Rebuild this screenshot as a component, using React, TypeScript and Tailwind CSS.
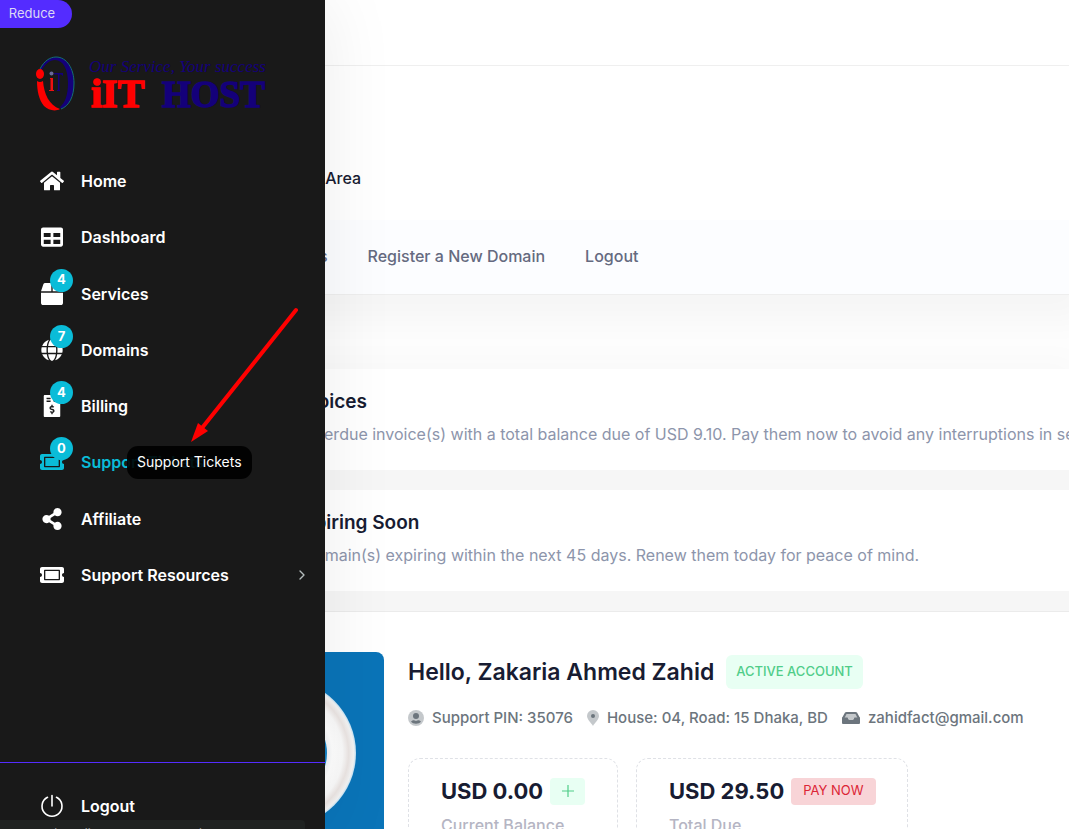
import type { ReactNode } from 'react'
import { FaHome, FaTable, FaBox, FaGlobe, FaFileInvoiceDollar, FaTicketAlt, FaShareAlt } from 'react-icons/fa'
import { FiChevronRight } from 'react-icons/fi'

interface MenuItem {
  label: string
  icon: ReactNode
  badge?: number
  active?: boolean
  submenu?: boolean
}

const menu: MenuItem[] = [
  { label: 'Home', icon: <FaHome size={24} /> },
  { label: 'Dashboard', icon: <FaTable size={22} /> },
  { label: 'Services', icon: <FaBox size={22} />, badge: 4 },
  { label: 'Domains', icon: <FaGlobe size={22} />, badge: 7 },
  { label: 'Billing', icon: <FaFileInvoiceDollar size={22} />, badge: 4 },
  { label: 'Support Tickets', icon: <FaTicketAlt size={24} />, badge: 0, active: true },
  { label: 'Affiliate', icon: <FaShareAlt size={22} /> },
  { label: 'Support Resources', icon: <FaTicketAlt size={24} />, submenu: true }
]

function Logo () {
  return (
    <svg width="240" height="58" viewBox="0 0 240 58" role="img" aria-label="iIT HOST">
      <path d="M4 13C8 5 14 1 20 1C31 1 38 13 38 27C38 41 33 50 25 53L24 51C29 47 32 39 32 27C32 13 27 4 19 4C14 4 9 8 6 14Z" fill="#14007a" />
      <path d="M4 13C8 5 14 1 20 1C31 1 38 13 38 27C38 41 33 50 25 53" fill="none" stroke="#14706f" strokeWidth="1" />
      <ellipse cx="4" cy="18" rx="4" ry="5" fill="#f00" />
      <path d="M1 25Q4 27 7 25C8 38 13 49 24 53C19 56 12 54 8 50C3 44 1 35 1 25Z" fill="#f00" />
      <circle cx="15.500" cy="17.500" r="2" fill="#6a6a9a" />
      <path d="M14 22H17V34H18V35H13V34H14.500V23H14Z" fill="#f01010" />
      <path d="M18 17H27V20L25 18.500H23.500V34H24V35H21V34H22V18.500H18Z" fill="#14007a" />
      <text x="53" y="16" fontFamily="Liberation Serif, serif" fontStyle="italic" fontSize="17" fill="#14007a">Our Service, Your success</text>
      <text x="55" y="51" fontFamily="Liberation Serif, serif" fontWeight="700" fontSize="40" fill="#f00" stroke="#f00" strokeWidth="1.5">iIT</text>
      <text x="126" y="51" fontFamily="Liberation Serif, serif" fontWeight="700" fontSize="37" fill="#14007a" stroke="#14007a" strokeWidth="1.5">HOST</text>
    </svg>
  )
}

function Row ({ item }: { item: MenuItem }) {
  return (
    <li className="relative flex items-center">
      <a href="#" className={`flex w-full items-center pl-10 pr-[15px] ${item.active ? 'text-[#0abcd8]' : 'text-white'}`}>
        <span className="relative flex size-6 items-center justify-center">
          {item.icon}
          {item.badge !== undefined && (
            <span className="absolute -top-[13px] left-2.5 flex size-[23px] items-center justify-center rounded-full bg-[#0abcd8] text-[13px] font-bold text-white">{item.badge}</span>
          )}
        </span>
        <span className="ml-[17px] flex-1 text-base font-semibold">{item.label}</span>
        {item.submenu && <FiChevronRight size={16} className="text-[#b5bdbd]" />}
      </a>
      {item.active && (
        <span role="tooltip" className="absolute left-[127px] flex h-[33px] items-center rounded-[11px] bg-black/90 px-2.5 text-sm text-white">
          Support Tickets
        </span>
      )}
    </li>
  )
}

function Sidebar () {
  return (
    <aside className="absolute inset-y-0 left-0 z-10 flex w-[325px] flex-col bg-[#191919] shadow-[0_0_70px_rgba(0,0,0,0.08)]">
      <div className="flex h-7">
        <button className="w-[72px] rounded-r-full bg-[#542cff] pr-2 text-[13px] text-[#dcd8f5]">Reduce</button>
      </div>
      <a href="#" className="mt-7 ml-9"><Logo /></a>
      <nav className="mt-[39px] flex-1">
        <ul className="grid h-[450px] grid-rows-8">
          {menu.map(item => <Row key={item.label} item={item} />)}
        </ul>
      </nav>
      <div className="h-[67px] border-t border-[#542cff] pt-[31px]">
        <a href="#" className="flex items-center pl-10 text-base font-semibold text-white">
          <svg width="24" height="24" viewBox="0 0 24 24" fill="none" stroke="currentColor" strokeWidth="1.6" strokeLinecap="round" aria-hidden="true">
            <path d="M12 1.500V12M7.500 3.300A10 10 0 1 0 16.500 3.300" />
          </svg>
          <span className="ml-[17px]">Logout</span>
        </a>
      </div>
      <div className="absolute bottom-0 left-0 h-[9px] w-[305px] overflow-hidden rounded-tr bg-[#1f2221] pt-1.5 pl-1 text-xs whitespace-nowrap text-white">
        https://clients.iithost.com/supporttickets.php
      </div>
    </aside>
  )
}

function Alert ({ title, text }: { title: string, text: string }) {
  return (
    <article className="flex h-[101px] flex-col gap-1 bg-white pt-[19px] pl-[207px] whitespace-nowrap">
      <h2 className="text-[19px] font-semibold leading-7 text-[#181c32]">{title}</h2>
      <p className="text-base leading-7 text-[#8d95ab]">{text}</p>
    </article>
  )
}

function Avatar () {
  return (
    <svg className="size-[204px] shrink-0 rounded-lg" viewBox="0 0 204 204" aria-hidden="true">
      <defs>
        <radialGradient id="ring">
          <stop offset="0.62" stopColor="#f4f6f8" />
          <stop offset="0.68" stopColor="#fff" />
          <stop offset="0.82" stopColor="#fafafa" />
          <stop offset="0.9" stopColor="#ebe5e3" />
          <stop offset="0.97" stopColor="#f4f4f4" />
          <stop offset="1" stopColor="#c4e2f4" />
        </radialGradient>
      </defs>
      <rect width="204" height="204" fill="#0a74b8" />
      <circle cx="102" cy="101" r="74" fill="url(#ring)" />
      <circle cx="102" cy="101" r="45" fill="#1582c4" />
    </svg>
  )
}

function Profile () {
  return (
    <section className="flex gap-6 border-t border-[#ebebeb] bg-white pt-10 pl-[180px] whitespace-nowrap">
      <Avatar />
      <div>
        <div className="flex h-10 items-center gap-3">
          <h1 className="text-[23px] font-semibold text-[#181c32]">Hello, Zakaria Ahmed Zahid</h1>
          <span className="flex h-[34px] items-center rounded-md bg-[#e8fff3] px-2.5 text-[13px] font-medium text-[#50cd89]">ACTIVE ACCOUNT</span>
        </div>
        <ul className="mt-3 flex gap-3.5 text-[15px] font-medium leading-7 text-[#6c757d]">
          <li className="flex items-center gap-2">
            <svg width="16" height="16" viewBox="0 0 16 16" fill="currentColor" aria-hidden="true">
              <circle cx="8" cy="8" r="8" opacity="0.4" />
              <circle cx="8" cy="6" r="3" />
              <path d="M3 11.500C5 10 6 10 8 11C10 10 11 10 13 11.500C11 14.500 5 14.500 3 11.500Z" />
            </svg>
            Support PIN: 35076
          </li>
          <li className="flex items-center gap-2">
            <svg width="12" height="16" viewBox="0 0 12 16" fill="currentColor" aria-hidden="true">
              <path d="M6 16C4.500 13 0 9.500 0 6A6 6 0 0 1 12 6C12 9.500 7.500 13 6 16Z" opacity="0.4" />
              <circle cx="6" cy="6" r="2" />
            </svg>
            House: 04, Road: 15 Dhaka, BD
          </li>
          <li className="flex items-center gap-2">
            <svg width="18" height="14" viewBox="0 0 18 14" fill="currentColor" aria-hidden="true">
              <path d="M4 2H14L16 7H12L11 9H7L6 7H2Z" opacity="0.4" />
              <path d="M0 6.500H5.500L7 9H11L12.500 6.500H18V12Q18 13 17 13H1Q0 13 0 12Z" />
              <path d="M3 1.500Q3.500 1 4.500 1H13.500Q14.500 1 15 1.500L18 7H15.500L13.500 3H4.500L2.500 7H0Z" />
            </svg>
            zahidfact@gmail.com
          </li>
        </ul>
        <div className="mt-[26px] flex gap-[18px]">
          <div className="h-[110px] w-[210px] rounded-xl border border-dashed border-[#dfe1e6] px-8 pt-4">
            <div className="flex h-8 items-center gap-[7px]">
              <strong className="text-[22px] font-bold text-[#181c32]">USD 0.00</strong>
              <button aria-label="Add funds" className="flex h-[27px] w-[35px] items-center justify-center rounded bg-[#e8fff3] text-[#50cd89]">
                <svg width="12" height="12" viewBox="0 0 12 12" stroke="currentColor" strokeWidth="1.2"><path d="M6 0V12M0 6H12" /></svg>
              </button>
            </div>
            <p className="mt-1.5 text-base font-medium text-[#b5b5c3]">Current Balance</p>
          </div>
          <div className="h-[110px] w-[272px] rounded-xl border border-dashed border-[#dfe1e6] px-8 pt-4">
            <div className="flex h-8 items-center gap-[7px]">
              <strong className="text-[22px] font-bold text-[#181c32]">USD 29.50</strong>
              <button className="h-[27px] rounded bg-[#f8d4d7] px-3 text-[13px] text-[#dc2535]">PAY NOW</button>
            </div>
            <p className="mt-1.5 text-base font-medium text-[#b5b5c3]">Total Due</p>
          </div>
        </div>
      </div>
    </section>
  )
}

export default function App () {
  return (
    <div className="relative h-screen overflow-hidden bg-[#fdfdfd] font-['Inter',sans-serif]">
      <main>
        <header className="bg-white shadow-[0_6px_30px_20px_rgba(0,0,0,0.03)]">
          <div className="h-[66px] border-b border-[#efefef]" />
          <div className="flex h-[154px] items-end pb-7 pl-[182px]">
            <p className="text-base font-medium leading-7 text-[#181c32]">Main Page / Client Area</p>
          </div>
          <nav className="flex h-[75px] items-center gap-10 border-b border-[#eeeeee] bg-[#fcfdff] pb-0.5 pl-[182px] text-base font-medium whitespace-nowrap text-[#656a80]">
            <a href="#">Order New Addons</a>
            <a href="#">Register a New Domain</a>
            <a href="#">Logout</a>
          </nav>
        </header>
        <section className="mt-[74px] flex flex-col gap-5 bg-[#f6f6f6] pb-5 shadow-[0_0_30px_10px_rgba(0,0,0,0.02)]">
          <Alert title="Overdue Invoices" text="You have 44 overdue invoice(s) with a total balance due of USD 9.10. Pay them now to avoid any interruptions in service." />
          <Alert title="Domains Expiring Soon" text="You have 20 domain(s) expiring within the next 45 days. Renew them today for peace of mind." />
        </section>
        <Profile />
      </main>
      <Sidebar />
      <svg className="pointer-events-none absolute top-[300px] left-[180px] z-20" width="130" height="150" viewBox="0 0 130 150" aria-hidden="true">
        <path d="M116 10L22 128" stroke="#f00" strokeWidth="4" strokeLinecap="round" />
        <path d="M11 142L18 123L28 131Z" fill="#f00" />
      </svg>
    </div>
  )
}
